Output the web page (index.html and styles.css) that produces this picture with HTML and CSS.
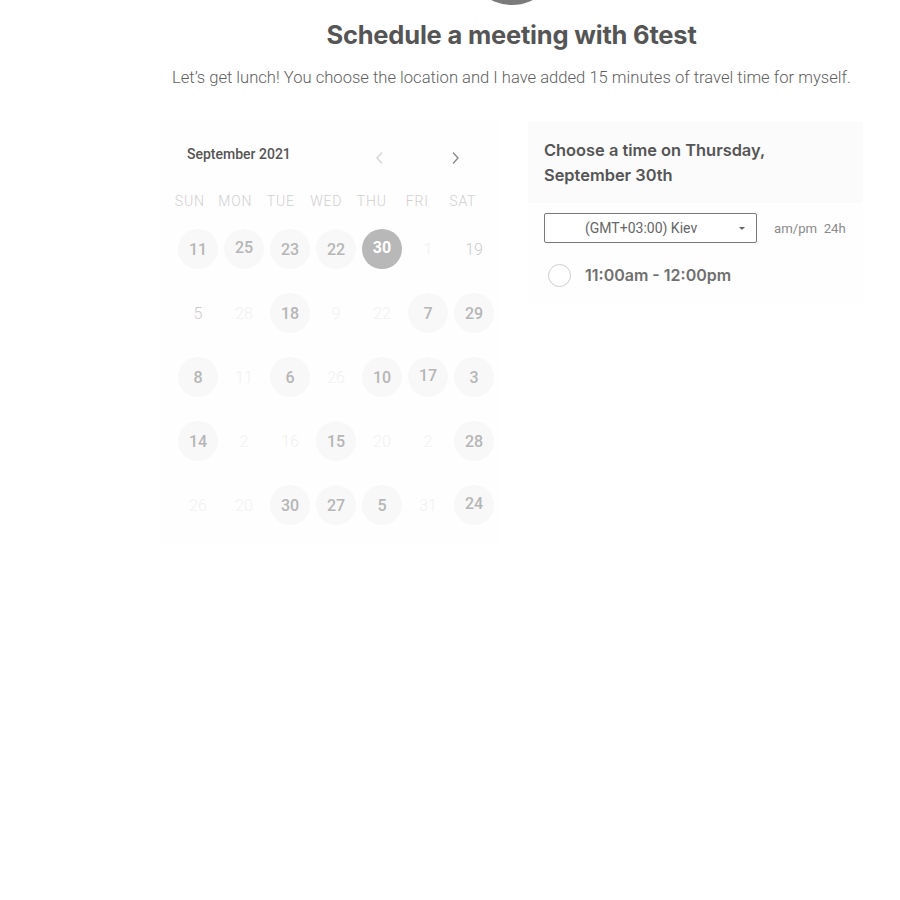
FILE: index.html
```html
<!DOCTYPE html>
<html>
<head>
<meta charset="utf-8">
<link rel="stylesheet" href="styles.css">
</head>
<body>
<div class="page">
  <header class="intro">
    <div class="avatar"></div>
    <h1 class="title">Schedule a meeting with 6test</h1>
    <p class="subtitle">Let’s get lunch! You choose the location and I have added 15 minutes of travel time for myself.</p>
  </header>
  <main class="panels">
    <section class="cal">
      <div class="cal-head">
        <span class="month">September 2021</span>
        <span class="nav prev"><svg width="9" height="14" viewBox="0 0 9 14"><path d="M7 1.5 L2 7 L7 12.5" fill="none" stroke="#d6d6d6" stroke-width="1.4"/></svg></span>
        <span class="nav next"><svg width="9" height="14" viewBox="0 0 9 14"><path d="M2 1.5 L7 7 L2 12.5" fill="none" stroke="#8a8a8a" stroke-width="1.4"/></svg></span>
      </div>
      <div class="weekdays">
        <span>SUN</span><span>MON</span><span>TUE</span><span>WED</span><span>THU</span><span>FRI</span><span>SAT</span>
      </div>
      <div class="days">
        <span class="d on">11</span><span class="d on up">25</span><span class="d on">23</span><span class="d on">22</span><span class="d sel up">30</span><span class="d off">1</span><span class="d dim">19</span>
        <span class="d dim">5</span><span class="d off">28</span><span class="d on">18</span><span class="d off">9</span><span class="d off">22</span><span class="d on">7</span><span class="d on">29</span>
        <span class="d on">8</span><span class="d off">11</span><span class="d on">6</span><span class="d off">26</span><span class="d on">10</span><span class="d on up">17</span><span class="d on">3</span>
        <span class="d on">14</span><span class="d off">2</span><span class="d off">16</span><span class="d on">15</span><span class="d off">20</span><span class="d off">2</span><span class="d on">28</span>
        <span class="d off">26</span><span class="d off">20</span><span class="d on">30</span><span class="d on">27</span><span class="d on">5</span><span class="d off">31</span><span class="d on up">24</span>
      </div>
    </section>
    <section class="times">
      <div class="times-head">Choose a time on Thursday, September 30th</div>
      <div class="tz-row">
        <div class="tz-select">
          <span class="tz-label">(GMT+03:00) Kiev</span>
          <span class="caret"></span>
        </div>
        <span class="fmt">am/pm&nbsp;&nbsp;24h</span>
      </div>
      <div class="slot">
        <span class="radio"></span>
        <span class="slot-label">11:00am - 12:00pm</span>
      </div>
    </section>
  </main>
</div>
</body>
</html>
```
FILE: styles.css
```css
html, body {
  margin: 0;
  padding: 0;
  background: #ffffff;
}
.page {
  width: 703px;
  margin-left: 160px;
  font-family: Roboto, "Liberation Sans", sans-serif;
}
.intro {
  display: flex;
  flex-direction: column;
  align-items: center;
}
.avatar {
  width: 92px;
  height: 92px;
  border-radius: 50%;
  background: #7b7b7b;
  margin-top: -87px;
}
.title {
  margin: 14px 0 0 0;
  font-family: Inter, "Liberation Sans", sans-serif;
  font-weight: 700;
  font-size: 25.5px;
  line-height: 32px;
  color: #555555;
  letter-spacing: -0.2px;
}
.subtitle {
  margin: 17px 0 0 0;
  font-size: 16.6px;
  line-height: 20px;
  font-weight: 300;
  color: #5f5f5f;
  white-space: nowrap;
}
.panels {
  display: grid;
  grid-template-columns: 337px 335px;
  column-gap: 31px;
  align-items: start;
  margin-top: 34px;
}
.cal {
  background: #fefefe;
  box-shadow: 0 0 2px rgba(0,0,0,0.025);
  padding: 20px 0 6px 0;
}
.cal-head {
  display: flex;
  align-items: center;
  height: 24px;
}
.month {
  margin-left: 27px;
  width: 182px;
  font-size: 14px;
  font-weight: 500;
  color: #555555;
}
.nav {
  display: flex;
  align-items: center;
  justify-content: center;
  width: 20px;
  height: 20px;
  margin-top: 8px;
}
.next { margin-left: 56px; }
.weekdays {
  display: grid;
  grid-template-columns: repeat(7, 45.5px);
  margin-left: 7px;
  margin-top: 25px;
  height: 20px;
  align-items: center;
}
.weekdays span {
  text-align: center;
  font-size: 14px;
  font-weight: 300;
  letter-spacing: 0.8px;
  color: #d0d0d0;
}
.days {
  display: grid;
  grid-template-columns: repeat(7, 46px);
  grid-auto-rows: 64px;
  margin-left: 15px;
  margin-top: 6px;
}
.d {
  justify-self: center;
  align-self: center;
  width: 40px;
  height: 40px;
  border-radius: 50%;
  display: flex;
  align-items: center;
  justify-content: center;
  font-size: 16px;
}
.d.up { padding-bottom: 4px; box-sizing: border-box; }
.d.on {
  background: #f8f8f8;
  color: #b6b6b6;
  font-weight: 500;
}
.d.sel {
  background: #b8b8b8;
  color: #ffffff;
  font-weight: 700;
}
.d.off {
  color: #f1f1f1;
  font-weight: 300;
}
.d.dim {
  color: #cccccc;
  font-weight: 300;
}
.times {
  background: #fefefe;
  box-shadow: 0 0 2px rgba(0,0,0,0.025);
  padding-bottom: 4px;
}
.times-head {
  background: #fbfbfb;
  padding: 16px 40px 15px 16px;
  font-family: Inter, "Liberation Sans", sans-serif;
  font-weight: 600;
  font-size: 16.4px;
  line-height: 25px;
  color: #555555;
}
.tz-row {
  display: flex;
  align-items: center;
  margin: 10px 0 0 16px;
}
.tz-select {
  width: 213px;
  height: 30px;
  box-sizing: border-box;
  border: 1px solid #7a7a7a;
  border-radius: 2px;
  display: flex;
  align-items: center;
  background: #ffffff;
}
.tz-label {
  margin-left: 40px;
  flex: 1;
  font-size: 14px;
  color: #666666;
}
.caret {
  width: 0;
  height: 0;
  border-left: 3px solid transparent;
  border-right: 3px solid transparent;
  border-top: 3px solid #666666;
  margin-right: 11px;
}
.fmt {
  margin-left: 17px;
  font-size: 13.2px;
  color: #8a8a8a;
}
.slot {
  display: flex;
  align-items: center;
  margin: 9px 0 0 20px;
  height: 46px;
}
.radio {
  width: 23px;
  height: 23px;
  box-sizing: border-box;
  border: 1px solid #cccccc;
  border-radius: 50%;
  background: #ffffff;
}
.slot-label {
  margin-left: 14px;
  font-family: Inter, "Liberation Sans", sans-serif;
  font-weight: 600;
  font-size: 16px;
  color: #707070;
}
```
